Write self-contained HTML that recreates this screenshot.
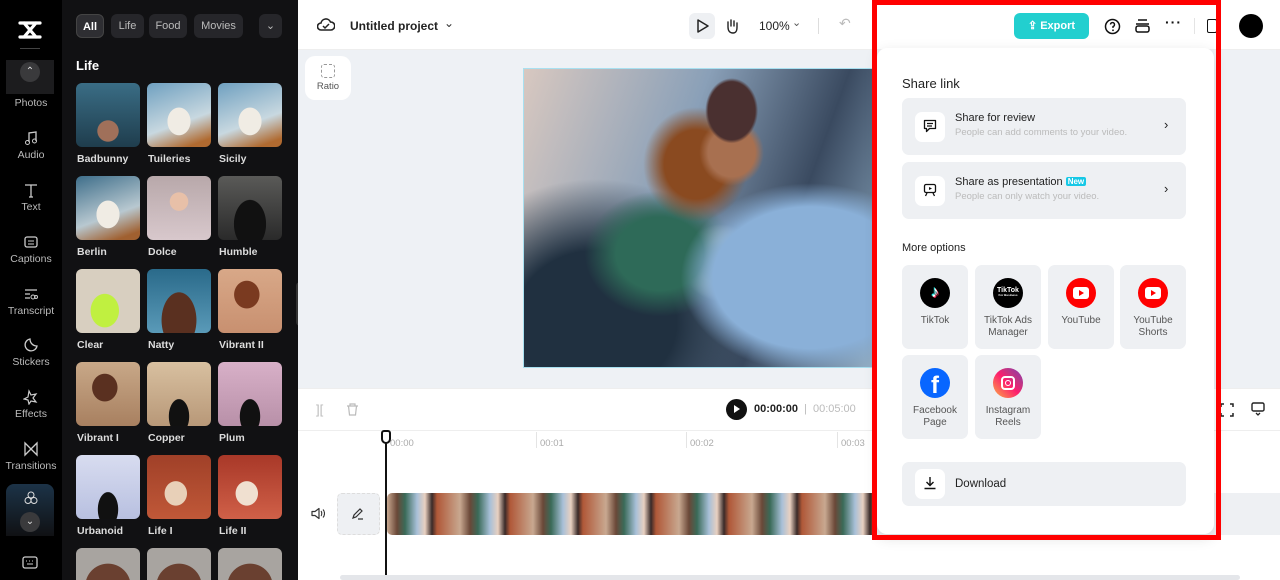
<!DOCTYPE html>
<html style="width:1280px;height:580px;overflow:hidden"><head><meta charset="utf-8"><style>
*{box-sizing:border-box;margin:0;padding:0}
body{width:1280px;height:580px;overflow:hidden;font-family:"Liberation Sans",sans-serif;background:#fff;position:relative}
.abs{position:absolute}
#nav{left:0;top:0;width:62px;height:580px;background:#000}
.ni{position:absolute;left:0;width:62px;text-align:center;color:#bbb;font-size:10.5px}
.ni svg{display:block;margin:0 auto 3px}
#panel{left:62px;top:0;width:236px;height:580px;background:#111113;overflow:hidden}
.chip{position:absolute;top:14px;height:24px;border-radius:6px;background:#26262a;color:#bbb;font-size:11px;line-height:24px;text-align:center}
.th{position:absolute;width:64px;height:64px;border-radius:6px;overflow:hidden}
.tl{position:absolute;color:#ddd;font-size:10.5px;font-weight:bold}
#hdr{left:298px;top:0;width:982px;height:50px;background:#fff;border-bottom:1px solid #eee}
#canvas{left:298px;top:50px;width:982px;height:338px;background:#eef1f5}
.sq{border-radius:8px}
.tile{position:absolute;width:66px;height:84px;background:#eef0f3;border-radius:7px;text-align:center;font-size:10px;color:#555;line-height:12px}
.tile .ic{width:30px;height:30px;border-radius:50%;margin:13px auto 7px;position:relative}
</style></head><body>

<div id="nav" class="abs">
 <svg class="abs" style="left:17px;top:19px" width="26" height="22" viewBox="0 0 26 22"><path d="M3 4h20M3 18h20M7 4l12 14M19 4L7 18" stroke="#fff" stroke-width="3.2" fill="none" stroke-linecap="round" stroke-linejoin="round"/></svg>
 <div class="abs" style="left:20px;top:48px;width:20px;height:1px;background:#444"></div>
 <div class="abs" style="left:6px;top:60px;width:48px;height:34px;background:#1c1c1e"></div>
 <div class="abs" style="left:20px;top:62px;width:20px;height:20px;border-radius:50%;background:#3a3a3c;color:#ddd;font-size:10px;text-align:center;line-height:20px">⌃</div>
 <div class="ni" style="top:97px">Photos</div>
 <div class="ni" style="top:130px"><svg width="16" height="16" viewBox="0 0 16 16"><path d="M6 12V3l7-1v9" stroke="#ccc" fill="none" stroke-width="1.3"/><circle cx="4.5" cy="12.5" r="2" stroke="#ccc" fill="none"/><circle cx="11.5" cy="11" r="2" stroke="#ccc" fill="none"/></svg>Audio</div>
 <div class="ni" style="top:182px"><svg width="16" height="16" viewBox="0 0 16 16"><path d="M2 3h12M8 3v12M6 15h4" stroke="#ccc" fill="none" stroke-width="1.3"/></svg>Text</div>
 <div class="ni" style="top:234px"><svg width="16" height="16" viewBox="0 0 16 16"><rect x="2" y="3" width="12" height="10" rx="2" stroke="#ccc" fill="none" stroke-width="1.3"/><path d="M5 7h6M5 10h6" stroke="#ccc"/></svg>Captions</div>
 <div class="ni" style="top:286px"><svg width="16" height="16" viewBox="0 0 16 16"><path d="M2 4h12M2 8h5M2 12h5" stroke="#ccc" fill="none" stroke-width="1.3"/><circle cx="10" cy="11" r="2" stroke="#ccc" fill="none"/><circle cx="13" cy="11" r="1.5" stroke="#ccc" fill="none"/></svg>Transcript</div>
 <div class="ni" style="top:337px"><svg width="16" height="16" viewBox="0 0 16 16"><path d="M14 9A6 6 0 1 1 7 2c0 4 3 7 7 7z" stroke="#ccc" fill="none" stroke-width="1.3"/></svg>Stickers</div>
 <div class="ni" style="top:389px"><svg width="16" height="16" viewBox="0 0 16 16"><path d="M6 2l2 4 5-1-3 4 3 4-5-1-2 3-1-4-4-1 4-2z" stroke="#ccc" fill="none" stroke-width="1.2"/></svg>Effects</div>
 <div class="ni" style="top:441px"><svg width="16" height="16" viewBox="0 0 16 16"><path d="M2 2v12l12-12v12z" stroke="#ccc" fill="none" stroke-width="1.3"/></svg>Transitions</div>
 <div class="abs" style="left:6px;top:484px;width:48px;height:52px;border-radius:8px 8px 0 0;background:linear-gradient(#1c3348,#101114)"></div>
 <svg class="abs" style="left:23px;top:490px" width="16" height="16" viewBox="0 0 16 16"><circle cx="8" cy="5" r="3" stroke="#ddd" fill="none"/><circle cx="5" cy="10.5" r="3" stroke="#ddd" fill="none"/><circle cx="11" cy="10.5" r="3" stroke="#ddd" fill="none"/></svg>
 <div class="abs" style="left:20px;top:512px;width:20px;height:20px;border-radius:50%;background:#3a3a3c;color:#ddd;font-size:10px;text-align:center;line-height:20px">⌄</div>
 <svg class="abs" style="left:22px;top:556px" width="16" height="14" viewBox="0 0 16 14"><rect x="1" y="1" width="14" height="11" rx="2" stroke="#ccc" fill="none" stroke-width="1.3"/><path d="M4 5h1M7 5h1M10 5h1M5 8h6" stroke="#ccc"/></svg>
</div>

<div id="panel" class="abs">
 <div class="chip" style="left:14px;width:28px;background:#2e2e32;color:#fff;font-weight:bold;border:1px solid #444">All</div>
 <div class="chip" style="left:49px;width:33px">Life</div>
 <div class="chip" style="left:87px;width:38px">Food</div>
 <div class="chip" style="left:132px;width:49px">Movies</div>
 <div class="chip" style="left:197px;width:23px">⌄</div>
 <div class="abs" style="left:14px;top:58px;color:#fff;font-size:13px;font-weight:bold">Life</div>
 <div style="position:absolute;left:-62px;top:0;width:298px;height:580px">
<div class="th" style="left:76px;top:83px;background:radial-gradient(circle at 50% 75%,#a0705a 0 18%,transparent 19%),linear-gradient(#3a6d85,#1f3d4d)"></div>
<div class="th" style="left:147px;top:83px;background:radial-gradient(ellipse at 50% 60%,#f0ece4 0 25%,transparent 26%),linear-gradient(160deg,#6fa0c0,#c8d8e0 60%,#b06a30 90%)"></div>
<div class="th" style="left:218px;top:83px;background:radial-gradient(ellipse at 50% 60%,#f0ece4 0 25%,transparent 26%),linear-gradient(160deg,#6fa0c0,#c8d8e0 60%,#b06a30 90%)"></div>
<div class="th" style="left:76px;top:176px;background:radial-gradient(ellipse at 50% 60%,#f0ece4 0 25%,transparent 26%),linear-gradient(160deg,#3e6e8a,#b8c8d0 60%,#a06030 90%)"></div>
<div class="th" style="left:147px;top:176px;background:radial-gradient(circle at 50% 40%,#e8c0a8 0 18%,transparent 19%),linear-gradient(#b8a8aa,#d8c8cc)"></div>
<div class="th" style="left:218px;top:176px;background:radial-gradient(ellipse at 50% 75%,#111 0 35%,transparent 36%),linear-gradient(#5a5a58,#2a2a2a)"></div>
<div class="th" style="left:76px;top:269px;background:radial-gradient(ellipse at 45% 65%,#c0f040 0 28%,transparent 29%),#d8cfc0"></div>
<div class="th" style="left:147px;top:269px;background:radial-gradient(ellipse at 50% 80%,#5a3020 0 38%,transparent 39%),linear-gradient(#2a6a8a,#5a9ab8)"></div>
<div class="th" style="left:218px;top:269px;background:radial-gradient(ellipse at 45% 40%,#7a3a20 0 25%,transparent 26%),linear-gradient(#d8a888,#c89070)"></div>
<div class="th" style="left:76px;top:362px;background:radial-gradient(ellipse at 45% 40%,#5a3020 0 25%,transparent 26%),linear-gradient(#c8a888,#a88060)"></div>
<div class="th" style="left:147px;top:362px;background:radial-gradient(ellipse at 50% 85%,#111 0 22%,transparent 23%),linear-gradient(#d8c0a0,#b89878)"></div>
<div class="th" style="left:218px;top:362px;background:radial-gradient(ellipse at 50% 85%,#111 0 22%,transparent 23%),linear-gradient(#d8b0c8,#b890a8)"></div>
<div class="th" style="left:76px;top:455px;background:radial-gradient(ellipse at 50% 85%,#111 0 22%,transparent 23%),linear-gradient(#d8dcf0,#b8c0e0)"></div>
<div class="th" style="left:147px;top:455px;background:radial-gradient(ellipse at 45% 60%,#e8d0b8 0 22%,transparent 23%),linear-gradient(#a04028,#c05838)"></div>
<div class="th" style="left:218px;top:455px;background:radial-gradient(ellipse at 45% 60%,#f0e0d0 0 22%,transparent 23%),linear-gradient(#a83828,#d06048)"></div>
<div class="th" style="left:76px;top:548px;height:32px;border-radius:6px 6px 0 0;background:radial-gradient(circle at 50% 120%,#6a4030 0 45%,transparent 46%),#a8a4a0"></div>
<div class="th" style="left:147px;top:548px;height:32px;border-radius:6px 6px 0 0;background:radial-gradient(circle at 50% 120%,#6a4030 0 45%,transparent 46%),#a8a4a0"></div>
<div class="th" style="left:218px;top:548px;height:32px;border-radius:6px 6px 0 0;background:radial-gradient(circle at 50% 120%,#6a4030 0 45%,transparent 46%),#a8a4a0"></div>
<div class="tl" style="left:77px;top:153px">Badbunny</div><div class="tl" style="left:148px;top:153px">Tuileries</div><div class="tl" style="left:219px;top:153px">Sicily</div>
<div class="tl" style="left:77px;top:246px">Berlin</div><div class="tl" style="left:148px;top:246px">Dolce</div><div class="tl" style="left:219px;top:246px">Humble</div>
<div class="tl" style="left:77px;top:339px">Clear</div><div class="tl" style="left:148px;top:339px">Natty</div><div class="tl" style="left:219px;top:339px">Vibrant II</div>
<div class="tl" style="left:77px;top:432px">Vibrant I</div><div class="tl" style="left:148px;top:432px">Copper</div><div class="tl" style="left:219px;top:432px">Plum</div>
<div class="tl" style="left:77px;top:525px">Urbanoid</div><div class="tl" style="left:148px;top:525px">Life I</div><div class="tl" style="left:219px;top:525px">Life II</div>
 </div>
</div>
<div class="abs" style="left:296px;top:282px;width:8px;height:44px;border-radius:4px;background:#333"></div>

<!-- header -->
<div id="hdr" class="abs">
 <svg class="abs" style="left:19px;top:17px" width="18" height="16" viewBox="0 0 18 16"><path d="M4 13a3.5 3.5 0 0 1 0-7 5 5 0 0 1 9.5-1A4 4 0 0 1 14 13z" stroke="#222" fill="none" stroke-width="1.6"/><path d="M6 9l2 2 4-4" stroke="#222" fill="none" stroke-width="1.5"/></svg>
 <div class="abs" style="left:52px;top:19px;font-size:12px;font-weight:bold;color:#222">Untitled project</div>
 <div class="abs" style="left:146px;top:16px;font-size:12px;color:#333">⌄</div>
 <div class="abs" style="left:391px;top:13px;width:26px;height:26px;border-radius:6px;background:#eef0f3"></div>
 <svg class="abs" style="left:398px;top:19px" width="13" height="14" viewBox="0 0 13 14"><path d="M2 1l10 6-10 6z" stroke="#222" fill="none" stroke-width="1.5" stroke-linejoin="round"/></svg>
 <svg class="abs" style="left:427px;top:18px" width="14" height="16" viewBox="0 0 14 16"><path d="M3 9V4M6 8V2M9 8V3M12 9V5M3 9c0 4 2 6 5 6s4-2 4-6" stroke="#222" fill="none" stroke-width="1.4" stroke-linecap="round"/></svg>
 <div class="abs" style="left:461px;top:19px;font-size:12px;color:#222">100%</div>
 <div class="abs" style="left:494px;top:16px;font-size:11px;color:#555">⌄</div>
 <div class="abs" style="left:520px;top:18px;width:1px;height:16px;background:#ddd"></div>
 <div class="abs" style="left:541px;top:15px;font-size:14px;color:#bbb">↶</div>
</div>
<div id="canvas" class="abs"></div>
<div class="abs sq" style="left:305px;top:56px;width:46px;height:44px;background:#fff;border-radius:10px;text-align:center">
 <div style="width:14px;height:14px;border:1.5px dashed #999;border-radius:3px;margin:8px auto 3px"></div>
 <div style="font-size:9.5px;color:#555">Ratio</div>
</div>
<div class="abs" style="left:523px;top:68px;width:360px;height:300px;border:1px solid #a8e0f0;background:
 radial-gradient(ellipse at 58% 14%,#4a3030 0 8%,transparent 9%),
 radial-gradient(ellipse at 58% 28%,#a87050 0 8%,transparent 11%),
 radial-gradient(ellipse at 48% 32%,#8a4a20 0 12%,transparent 20%),
 radial-gradient(ellipse at 80% 70%,#8ab0d8 0 24%,transparent 32%),
 radial-gradient(ellipse at 38% 62%,#2e6a58 0 14%,transparent 24%),
 radial-gradient(ellipse at 55% 65%,#d8d0c8 0 8%,transparent 14%),
 radial-gradient(ellipse at 20% 85%,#203040 0 20%,transparent 40%),
 linear-gradient(110deg,#d8c8c0,#8aa0b8 40%,#3a4a60 70%,#9ab8d0)"></div>

<!-- timeline -->
<div class="abs" style="left:298px;top:388px;width:982px;height:192px;background:#fff;border-top:1px solid #eee"></div>
<div class="abs" style="left:316px;top:402px;font-size:13px;color:#bbb">][</div>
<svg class="abs" style="left:346px;top:403px" width="13" height="13" viewBox="0 0 13 13"><path d="M1 3h11M4 3V1h5v2M2.5 3l1 9h6l1-9" stroke="#bbb" fill="none" stroke-width="1.2"/></svg>
<div class="abs" style="left:726px;top:399px;width:21px;height:21px;border-radius:50%;background:#111"></div>
<div class="abs" style="left:734px;top:405px;width:0;height:0;border-left:6px solid #fff;border-top:4.5px solid transparent;border-bottom:4.5px solid transparent"></div>
<div class="abs" style="left:754px;top:403px;font-size:11px;font-weight:bold;color:#222">00:00:00</div>
<div class="abs" style="left:804px;top:403px;font-size:11px;color:#bbb">|&nbsp; 00:05:00</div>
<div class="abs" style="left:298px;top:430px;width:982px;height:1px;background:#eee"></div>
<div class="abs" style="left:390px;top:438px;font-size:9.5px;color:#aaa">00:00</div>
<div class="abs" style="left:536px;top:432px;width:1px;height:16px;background:#e4e4e4"></div><div class="abs" style="left:540px;top:438px;font-size:9.5px;color:#aaa">00:01</div>
<div class="abs" style="left:686px;top:432px;width:1px;height:16px;background:#e4e4e4"></div><div class="abs" style="left:690px;top:438px;font-size:9.5px;color:#aaa">00:02</div>
<div class="abs" style="left:837px;top:432px;width:1px;height:16px;background:#e4e4e4"></div><div class="abs" style="left:841px;top:438px;font-size:9.5px;color:#aaa">00:03</div>
<svg class="abs" style="left:311px;top:507px" width="14" height="13" viewBox="0 0 14 13"><path d="M1 4.5h3l4-3v10l-4-3H1z" stroke="#333" fill="none" stroke-width="1.2" stroke-linejoin="round"/><path d="M10 4c1 1 1 4 0 5M12 2.5c2 2 2 6 0 8" stroke="#333" fill="none" stroke-width="1.1"/></svg>
<div class="abs" style="left:337px;top:493px;width:43px;height:42px;border-radius:5px;background:#eef0f3;border:1px dashed #ddd"></div>
<svg class="abs" style="left:351px;top:507px" width="14" height="14" viewBox="0 0 14 14"><path d="M2 11l1-3 6-6 2 2-6 6zM7 12h5" stroke="#333" fill="none" stroke-width="1.2"/></svg>
<div class="abs" style="left:875px;top:493px;width:405px;height:42px;background:#eef0f3"></div>
<div class="abs" style="left:387px;top:493px;width:490px;height:42px;border-radius:5px;background:repeating-linear-gradient(90deg,#c8a890 0,#6a4838 10px,#3a6a58 18px,#a8c0d8 30px,#e8d0c0 38px,#3a2a28 45px,#b05838 50px,#c8a890 73px)"></div>
<div class="abs" style="left:385px;top:440px;width:2px;height:140px;background:#111"></div>
<div class="abs" style="left:381px;top:430px;width:10px;height:14px;border:2px solid #111;border-radius:3px 3px 5px 5px;background:#fff"></div>
<div class="abs" style="left:340px;top:575px;width:900px;height:5px;border-radius:3px;background:#e4e6ea"></div>
<svg class="abs" style="left:1220px;top:403px" width="14" height="14" viewBox="0 0 14 14"><path d="M1 4V1h3M10 1h3v3M13 10v3h-3M4 13H1v-3" stroke="#222" fill="none" stroke-width="1.5"/></svg>
<svg class="abs" style="left:1251px;top:402px" width="14" height="14" viewBox="0 0 14 14"><rect x="1" y="1" width="12" height="8" rx="1.5" stroke="#222" fill="none" stroke-width="1.4"/><path d="M5 11l2 2 2-2" stroke="#222" fill="none" stroke-width="1.3"/></svg>

<!-- top right header items -->
<div class="abs" style="left:1014px;top:13px;width:75px;height:26px;border-radius:6px;background:#22cfcf;color:#fff;font-size:11px;font-weight:bold;line-height:26px;text-align:center">⇪ Export</div>
<svg class="abs" style="left:1104px;top:18px" width="17" height="17" viewBox="0 0 17 17"><circle cx="8.5" cy="8.5" r="7" stroke="#111" fill="none" stroke-width="1.5"/><path d="M6.5 6.5a2 2 0 1 1 2.5 2v1.5" stroke="#111" fill="none" stroke-width="1.4"/><circle cx="9" cy="12.3" r=".9" fill="#111"/></svg>
<svg class="abs" style="left:1135px;top:18px" width="15" height="16" viewBox="0 0 15 16"><path d="M3 2h9M1 6h13" stroke="#111" stroke-width="1.5"/><rect x="1" y="8" width="13" height="6" rx="2" stroke="#111" fill="none" stroke-width="1.5"/></svg>
<div class="abs" style="left:1165px;top:14px;font-size:14px;font-weight:bold;color:#111;letter-spacing:1px">···</div>
<div class="abs" style="left:1194px;top:18px;width:1px;height:16px;background:#e4e4e4"></div>
<div class="abs" style="left:1207px;top:19px;width:10px;height:14px;border:1.6px solid #111;border-radius:2px"></div>
<div class="abs" style="left:1239px;top:14px;width:24px;height:24px;border-radius:50%;background:#000"></div>

<!-- red box + popup -->
<div class="abs" style="left:877px;top:48px;width:337px;height:486px;background:#fff;border-radius:10px;box-shadow:0 4px 14px rgba(0,0,0,.12)">
 <div class="abs" style="left:25px;top:28px;font-size:13px;color:#222">Share link</div>
 <div class="abs" style="left:25px;top:50px;width:284px;height:57px;background:#eef0f3;border-radius:7px">
  <div class="abs" style="left:13px;top:14px;width:30px;height:30px;background:#fff;border-radius:7px"></div>
  <svg class="abs" style="left:21px;top:21px" width="14" height="14" viewBox="0 0 14 14"><path d="M1.5 1.5h11v8h-6l-3 3v-3h-2z" stroke="#111" fill="none" stroke-width="1.3" stroke-linejoin="round"/><path d="M4 4.5h6M4 7h5" stroke="#111" stroke-width="1.2"/></svg>
  <div class="abs" style="left:53px;top:14px;font-size:11px;color:#222">Share for review</div>
  <div class="abs" style="left:53px;top:29px;font-size:9.5px;color:#bbb">People can add comments to your video.</div>
  <div class="abs" style="left:262px;top:19px;font-size:13px;color:#222">›</div>
 </div>
 <div class="abs" style="left:25px;top:114px;width:284px;height:57px;background:#eef0f3;border-radius:7px">
  <div class="abs" style="left:13px;top:14px;width:30px;height:30px;background:#fff;border-radius:7px"></div>
  <svg class="abs" style="left:21px;top:21px" width="14" height="14" viewBox="0 0 14 14"><rect x="1.5" y="1.5" width="11" height="8" rx="1.5" stroke="#111" fill="none" stroke-width="1.3"/><path d="M6 4l3 1.5L6 7z" fill="#111"/><path d="M4 10l-1.5 3M10 10l1.5 3" stroke="#111" stroke-width="1.3"/></svg>
  <div class="abs" style="left:53px;top:14px;font-size:11px;color:#222">Share as presentation <span style="background:#16c8e6;color:#fff;font-size:8px;font-weight:bold;padding:0 2px;border-radius:2px;vertical-align:1px">New</span></div>
  <div class="abs" style="left:53px;top:29px;font-size:9.5px;color:#bbb">People can only watch your video.</div>
  <div class="abs" style="left:262px;top:19px;font-size:13px;color:#222">›</div>
 </div>
 <div class="abs" style="left:25px;top:194px;font-size:11px;color:#222">More options</div>
 <div class="tile" style="left:25px;top:217px"><div class="ic" style="background:#000;color:#fff;font-size:16px;line-height:30px;text-shadow:-1px -1px #25f4ee,1px 1px #fe2c55">♪</div>TikTok</div>
 <div class="tile" style="left:98px;top:217px"><div class="ic" style="background:#000;color:#fff;font-size:7px;font-weight:bold;line-height:26px">TikTok<div style="font-size:3px;line-height:0;margin-top:-9px">For Business</div></div>TikTok Ads<br>Manager</div>
 <div class="tile" style="left:171px;top:217px"><div class="ic" style="background:#ff0000"><div class="abs" style="left:7px;top:9px;width:16px;height:12px;background:#fff;border-radius:3px"></div><div class="abs" style="left:13px;top:12px;border-left:5px solid #f00;border-top:3px solid transparent;border-bottom:3px solid transparent"></div></div>YouTube</div>
 <div class="tile" style="left:243px;top:217px"><div class="ic" style="background:#ff0000"><div class="abs" style="left:7px;top:9px;width:16px;height:12px;background:#fff;border-radius:3px"></div><div class="abs" style="left:13px;top:12px;border-left:5px solid #f00;border-top:3px solid transparent;border-bottom:3px solid transparent"></div></div>YouTube<br>Shorts</div>
 <div class="tile" style="left:25px;top:307px"><div class="ic" style="background:#0866ff;color:#fff;font-weight:bold;font-size:24px;line-height:36px;overflow:hidden">f</div>Facebook<br>Page</div>
 <div class="tile" style="left:98px;top:307px"><div class="ic" style="background:linear-gradient(45deg,#fcb045,#fd1d6d 50%,#c13584 70%,#833ab4)"><div class="abs" style="left:8px;top:8px;width:14px;height:14px;border:2px solid #fff;border-radius:4px"></div><div class="abs" style="left:12px;top:12px;width:6px;height:6px;border:1.5px solid #fff;border-radius:50%"></div></div>Instagram<br>Reels</div>
 <div class="abs" style="left:25px;top:414px;width:284px;height:44px;background:#eef0f3;border-radius:7px">
  <div class="abs" style="left:13px;top:7px;width:30px;height:30px;background:#fff;border-radius:7px"></div>
  <svg class="abs" style="left:21px;top:14px" width="14" height="14" viewBox="0 0 14 14"><path d="M7 1v8M3.5 6L7 9.5 10.5 6M1.5 12.5h11" stroke="#111" fill="none" stroke-width="1.4"/></svg>
  <div class="abs" style="left:53px;top:16px;font-size:11.5px;color:#222">Download</div>
 </div>
</div>
<div class="abs" style="left:872px;top:0;width:349px;height:540px;border:5px solid #ff0000"></div>
</body></html>
